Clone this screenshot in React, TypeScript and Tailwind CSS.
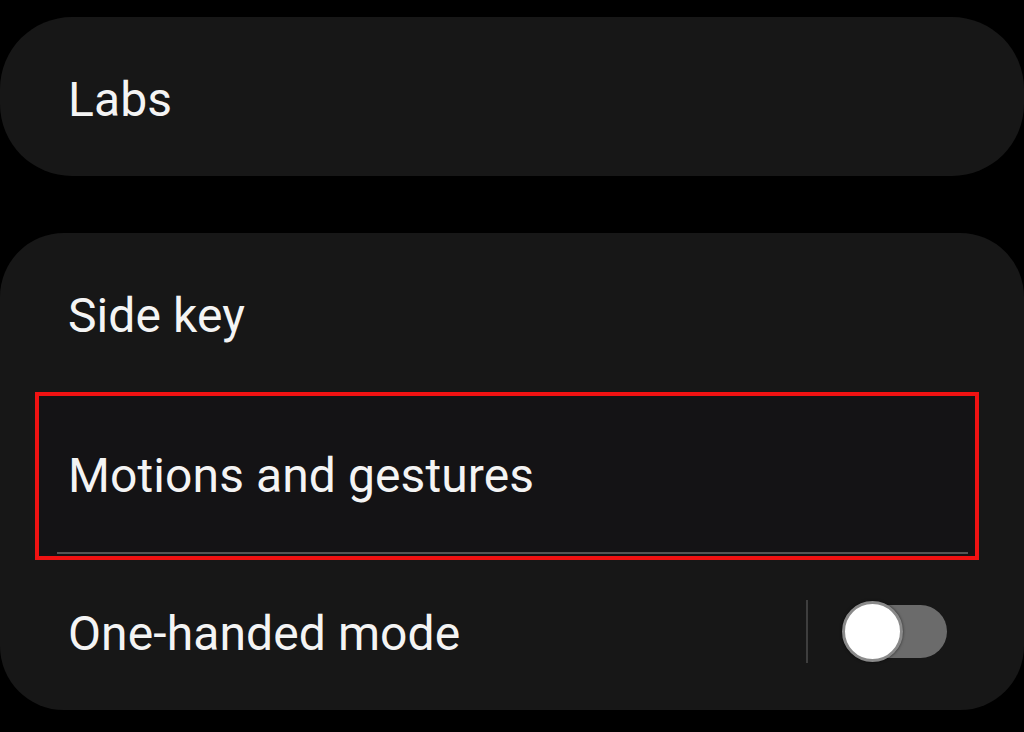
const rowText = "text-[48px] leading-[48px] text-[#f4f4f4] font-['Roboto','Noto_Sans',sans-serif] tracking-[0.1px]"

const Toggle = () => (
    <div className="relative w-[105px] h-[62px] flex items-center">
        <div className="absolute left-[5px] right-0 h-[53px] rounded-full bg-[#6b6b6b]"></div>
        <div className="relative w-[61px] h-[61px] rounded-full bg-white border-[3px] border-[#8a8a8a] shadow-[0_0_3px_rgba(0,0,0,0.6)]"></div>
    </div>
)

export default function App() {
    return (
        <div className="w-[1024px] h-[732px] bg-black overflow-hidden pt-[17px]">
            <div className="h-[159px] bg-[#171717] rounded-[72px] pl-[68px] pt-[59px]">
                <div className={rowText}>Labs</div>
            </div>

            <div className="mt-[57px] h-[477px] bg-[#171717] rounded-[64px] flex flex-col">
                <div className="h-[159px] pl-[68px] pt-[59px]">
                    <div className={rowText}>Side key</div>
                </div>

                <div className="ml-[35px] w-[944px] h-[168px] border-4 border-[#f01212] bg-[#141315] flex flex-col">
                    <div className="pl-[29px] pt-[56px] flex-1">
                        <div className={rowText}>Motions and gestures</div>
                    </div>
                    <div className="ml-[18px] mr-[7px] mb-[2px] h-[2px] bg-[#555555]"></div>
                </div>

                <div className="h-[150px] flex items-center pb-[8px] pl-[68px] pr-[77px]">
                    <div className={`${rowText} mt-[6px] flex-1`}>One-handed mode</div>
                    <div className="w-[2px] h-[63px] bg-[#3e3e3e] mr-[34px]"></div>
                    <Toggle />
                </div>
            </div>
        </div>
    )
}
